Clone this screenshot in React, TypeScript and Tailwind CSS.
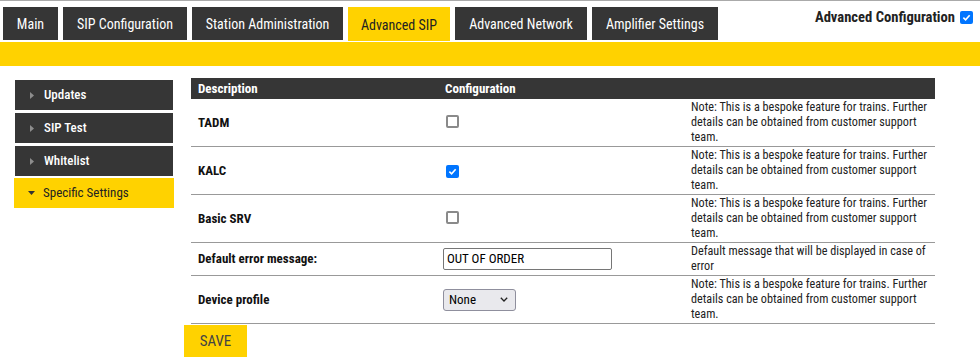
import React from 'react';

const font = { fontFamily: '"Liberation Sans Narrow", "Roboto Condensed", Roboto, sans-serif' };

const tabs = [
    { label: 'Main', w: 'w-[55px]' },
    { label: 'SIP Configuration', w: 'w-[124px]' },
    { label: 'Station Administration', w: 'w-[151px]' },
    { label: 'Advanced SIP', w: 'w-[102px]', active: true },
    { label: 'Advanced Network', w: 'w-[132px]' },
    { label: 'Amplifier Settings', w: 'w-[126px]' },
];

const sideItems = ['Updates', 'SIP Test', 'Whitelist'];

const NOTE = 'Note: This is a bespoke feature for trains. Further details can be obtained from customer support team.';

function Checkbox({ checked }: { checked?: boolean }) {
    if (checked) {
        return (
            <span className="inline-flex w-[13px] h-[13px] rounded-[2px] bg-[#0075ff] items-center justify-center">
                <svg width="9" height="9" viewBox="0 0 10 10">
                    <path d="M1.5 5.2 L4 7.5 L8.5 2.5" fill="none" stroke="#fff" strokeWidth="1.8" />
                </svg>
            </span>
        );
    }
    return <span className="inline-block w-[13px] h-[13px] rounded-[2px] border-2 border-[#8a8a8a] bg-white" />;
}

function Row({ label, note, children }: { label: string; note: string; children: React.ReactNode }) {
    return (
        <div className="grid grid-cols-[249px_246px_249px] border-b border-[#999]">
            <div className="flex items-center pl-[7px] text-[13px] font-bold text-[#111]">{label}</div>
            <div className="flex items-center pl-[2px]">{children}</div>
            <div className="py-[1px] pl-[5px] pr-[6px] text-[12.2px] leading-[15px] text-[#222]">{note}</div>
        </div>
    );
}

export default function App() {
    return (
        <div className="w-[980px] h-[363px] bg-white overflow-hidden" style={font}>
            <div className="h-px bg-[#aaa]" />
            <div className="flex items-end justify-between pt-[6px] pl-[3px] pr-[7px]">
                <div className="flex gap-[5px]">
                    {tabs.map((t) => (
                        <div
                            key={t.label}
                            className={`${t.w} flex items-center justify-center pt-[2px] text-[14px] ${t.active ? 'h-[34px] bg-[#ffd200] text-[#222]' : 'h-[33px] bg-[#363636] text-white'}`}
                        >
                            {t.label}
                        </div>
                    ))}
                </div>
                <div className="self-start h-[21px] flex items-center gap-[5px]">
                    <span className="text-[14.6px] font-bold text-[#222]">Advanced Configuration</span>
                    <Checkbox checked />
                </div>
            </div>
            <div className="h-[24px] mt-px bg-[#ffd200]" />

            <div className="flex pt-[12px]">
                <div className="w-[184px] pl-[14px] pt-[2px] flex flex-col gap-[3px]">
                    {sideItems.map((s) => (
                        <div key={s} className="ml-px w-[158px] h-[30px] bg-[#363636] flex items-center text-white text-[13px] font-medium">
                            <svg className="ml-[15px] mr-[10px]" width="4" height="7" viewBox="0 0 4 7">
                                <path d="M0 0 L4 3.5 L0 7 Z" fill="#8d8d8d" />
                            </svg>
                            {s}
                        </div>
                    ))}
                    <div className="-mt-px w-[160px] h-[30px] bg-[#ffd200] flex items-center text-[#222] text-[13px]">
                        <svg className="ml-[14px] mr-[8px]" width="7" height="4" viewBox="0 0 7 4">
                            <path d="M0 0 L7 0 L3.5 4 Z" fill="#333" />
                        </svg>
                        Specific Settings
                    </div>
                </div>

                <div className="flex flex-col">
                    <div className="ml-[7px] w-[744px]">
                        <div className="grid grid-cols-[249px_246px_249px] h-[21px] bg-[#363636] text-white text-[13px] font-bold items-center">
                            <div className="pl-[7px]">Description</div>
                            <div className="pl-[5px]">Configuration</div>
                            <div />
                        </div>
                        <Row label="TADM" note={NOTE}>
                            <span className="ml-[4px]"><Checkbox /></span>
                        </Row>
                        <Row label="KALC" note={NOTE}>
                            <span className="ml-[4px]"><Checkbox checked /></span>
                        </Row>
                        <Row label="Basic SRV" note={NOTE}>
                            <span className="ml-[4px]"><Checkbox /></span>
                        </Row>
                        <Row label="Default error message:" note="Default message that will be displayed in case of error">
                            <div className="ml-px w-[169px] h-[22px] border border-[#767676] rounded-[2px] flex items-center pl-[3px] text-[13px] text-black">
                                OUT OF ORDER
                            </div>
                        </Row>
                        <Row label="Device profile" note={NOTE}>
                            <div className="ml-px w-[73px] h-[22px] border border-[#8f8f9d] rounded-[3px] bg-[#e9e9ed] flex items-center justify-between pl-[5px] pr-[7px] text-[13px] text-black">
                                None
                                <svg width="8" height="5" viewBox="0 0 8 5">
                                    <path d="M0.8 0.8 L4 4 L7.2 0.8" fill="none" stroke="#222" strokeWidth="1.3" />
                                </svg>
                            </div>
                        </Row>
                    </div>
                    <div className="mt-[1px] w-[63px] h-[32px] bg-[#ffd200] flex items-center justify-center text-[15px] text-[#444]">
                        SAVE
                    </div>
                </div>
            </div>
        </div>
    );
}
